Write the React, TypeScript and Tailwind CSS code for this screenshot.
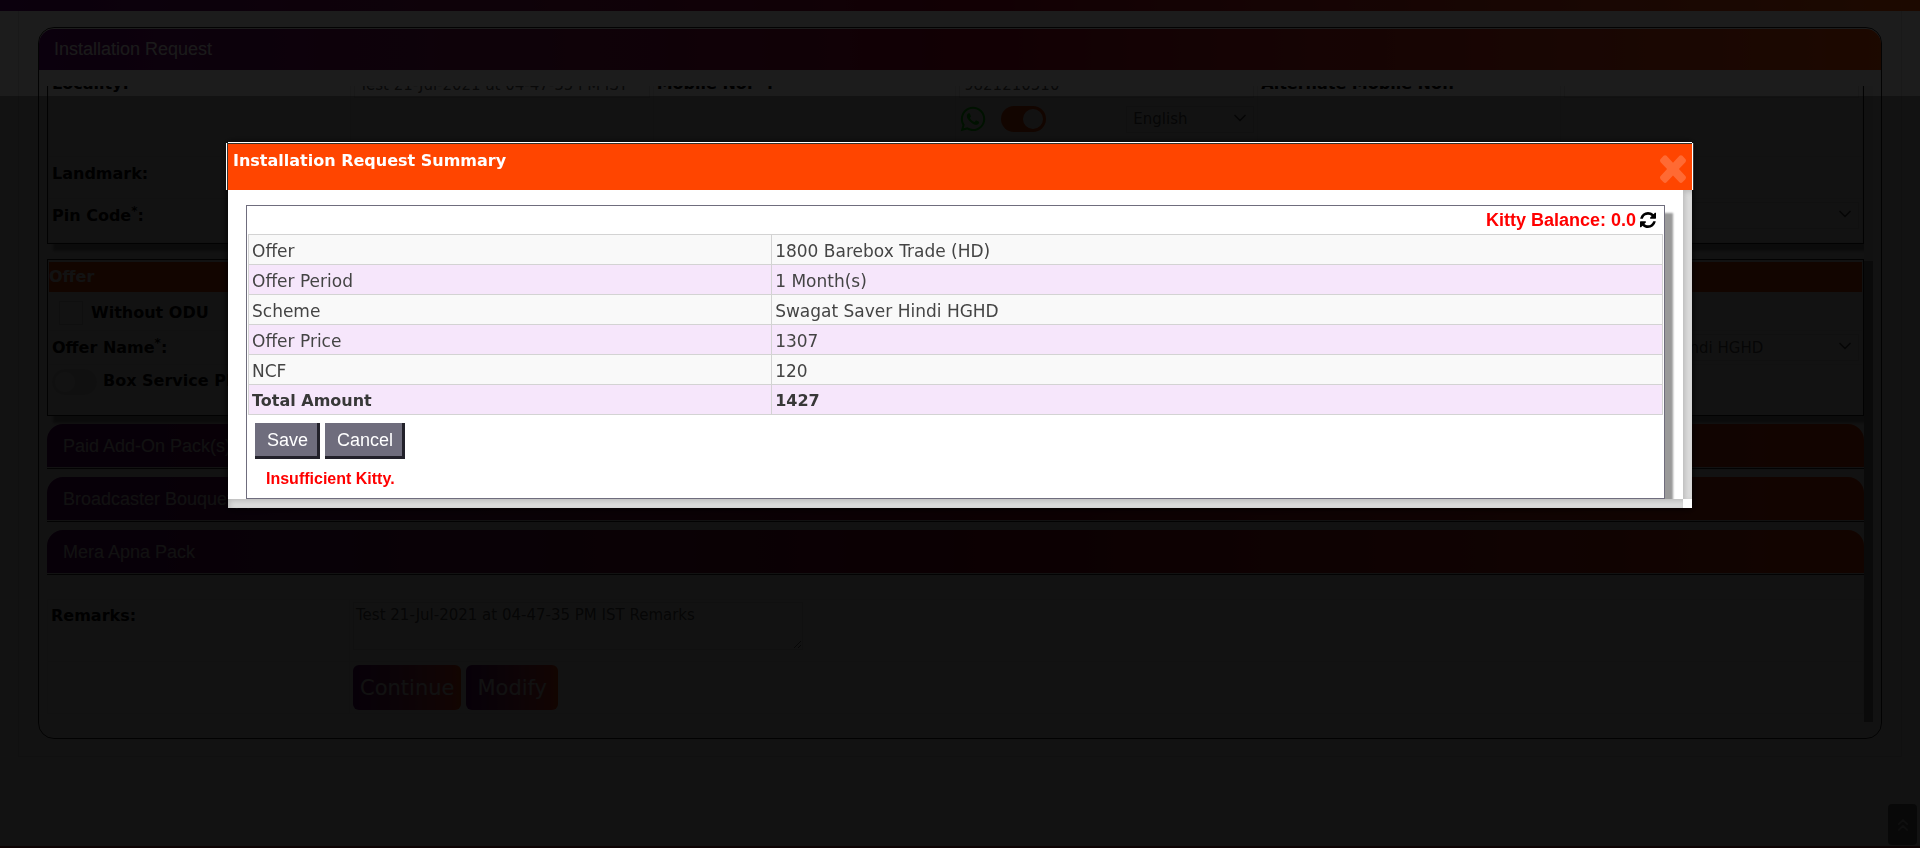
import type { ReactNode } from 'react';
import { ChevronDown, ChevronsUp } from 'lucide-react';
import { FaWhatsapp } from 'react-icons/fa';

const summary = [
  { label: 'Offer', value: '1800 Barebox Trade (HD)' },
  { label: 'Offer Period', value: '1 Month(s)' },
  { label: 'Scheme', value: 'Swagat Saver Hindi HGHD' },
  { label: 'Offer Price', value: '1307' },
  { label: 'NCF', value: '120' },
  { label: 'Total Amount', value: '1427', bold: true },
];

const packs = ['Paid Add-On Pack(s)', 'Broadcaster Bouquet(s)', 'Mera Apna Pack'];

const cell = 'border border-[#e8e8e8] px-[3px]';
const field = 'w-full border border-[#ddd] bg-white px-1 text-[15px] text-[#555]';

function SelectBox({ id, label, value, className }: { id: string; label: string; value: string; className: string }) {
  return (
    <div className={className}>
      <select id={id} aria-label={label} defaultValue={value} className="h-full w-full appearance-none border border-[#e0e0e0] bg-white px-1.5 text-[15px] text-[#555]">
        <option>{value}</option>
      </select>
      <ChevronDown className="pointer-events-none absolute right-1 top-0.5 text-[#444]" size={20} />
    </div>
  );
}

function Toggle({ id, label, on }: { id: string; label: string; on?: boolean }) {
  return (
    <input
      id={id}
      type="checkbox"
      role="switch"
      aria-label={label}
      defaultChecked={on}
      className="h-[26px] w-[45px] shrink-0 appearance-none rounded-full bg-[#e4e4e4] before:mt-[3px] before:ml-[3px] before:block before:size-5 before:rounded-full before:bg-white before:content-[''] checked:bg-[#ff4500] checked:before:ml-[22px]"
    />
  );
}

function Box({ children }: { children: ReactNode }) {
  return <section className="border border-[#222] bg-[#fbfbfb] shadow-[6px_7px_3px_#999]">{children}</section>;
}

function RequestForm() {
  return (
    <div className="flex overflow-hidden">
      <div className="min-w-0 flex-1 overflow-hidden pb-2">
        <div className="-mt-[26px]">
          <Box>
            <table className="w-full table-fixed border-collapse">
              <tbody>
                <tr className="h-[95px] align-top">
                  <td className={`${cell} pt-2.5 font-bold`}>Locality:</td>
                  <td className={`${cell} pt-1`}>
                    <input aria-label="Locality" className={`${field} h-8 pt-1.5`} defaultValue="Test 21-Jul-2021 at 04-47-35 PM IST" />
                  </td>
                  <td className={`${cell} pt-2.5 font-bold`}>Mobile No. *:</td>
                  <td className={`${cell} pt-1`}>
                    <input aria-label="Mobile number" className={`${field} h-8 pt-1.5`} defaultValue="9821210510" />
                    <div className="mt-[7px] flex items-center">
                      <FaWhatsapp size={28} className="text-[#00f000]" />
                      <span className="ml-3.5 flex">
                        <Toggle id="whatsapp" label="WhatsApp updates" on />
                      </span>
                      <SelectBox id="language" label="Language" value="English" className="relative ml-auto h-[27px] w-32" />
                    </div>
                  </td>
                  <td className={`${cell} pt-2.5 font-bold`}>Alternate Mobile No.:</td>
                  <td className={`${cell} pt-1`}>
                    <input aria-label="Alternate mobile number" className={`${field} h-8`} />
                  </td>
                </tr>
                <tr className="h-[42px]">
                  <td className={`${cell} pb-2 font-bold`}>Landmark:</td>
                  <td className={cell} colSpan={5} />
                </tr>
                <tr className="h-11">
                  <td className={`${cell} pb-2.5 font-bold`}>
                    Pin Code<sup>*</sup>:
                  </td>
                  <td className={cell} colSpan={4} />
                  <td className={`${cell} pb-2.5`}>
                    <SelectBox id="area" label="Area" value="" className="relative h-[27px]" />
                  </td>
                </tr>
              </tbody>
            </table>
          </Box>
        </div>
        <div className="mt-[15px]">
          <Box>
            <div className="px-px py-0.5">
              <h2 className="h-[30px] bg-[#ff4500] text-base leading-[30px] font-bold text-white">Offer</h2>
              <div className="flex h-[39px] items-center gap-2 border-b border-[#e8e8e8] px-2.5 pt-1">
                <input id="odu" type="checkbox" className="size-6 appearance-none border border-[#ccc]" />
                <label htmlFor="odu" className="font-bold">Without ODU</label>
              </div>
              <div className="flex h-[34px] items-center justify-between border-b border-[#e8e8e8] px-[3px]">
                <label htmlFor="offer" className="font-bold">
                  Offer Name<sup>*</sup>:
                </label>
                <SelectBox id="offer" label="Scheme" value="Swagat Saver Hindi HGHD" className="relative h-[27px] w-[300px]" />
              </div>
              <div className="flex h-12 items-start gap-1.5 px-[3px] pt-1">
                <Toggle id="plan" label="Box Service Plan" />
                <label htmlFor="plan" className="font-bold">Box Service Plan</label>
              </div>
            </div>
          </Box>
        </div>
        <div className="mt-2 flex flex-col gap-2">
          {packs.map((pack) => (
            <div key={pack} className="rounded-t-[16px] border-b border-[#333] pb-px">
              <button className="block h-[43px] w-full rounded-t-[16px] bg-linear-to-r from-[#640074] via-[#a00028] to-[#ff4000] px-4 text-left font-['Liberation_Sans',Arial,sans-serif] text-[18px] text-[#eee]">
                {pack}
              </button>
            </div>
          ))}
        </div>
        <table className="mt-6 w-full border-collapse bg-[#fbfbfb]">
          <tbody>
            <tr className="h-[62px] align-top">
              <td className={`${cell} w-[302px] pt-1`}>
                <label htmlFor="remarks" className="font-bold">Remarks:</label>
              </td>
              <td className={`${cell} pt-0.5`}>
                <textarea id="remarks" className="block h-12 w-[450px] border border-[#ddd] bg-white px-0.5 text-[15px] text-[#555]" defaultValue="Test 21-Jul-2021 at 04-47-35 PM IST Remarks" />
              </td>
            </tr>
            <tr className="h-[52px]">
              <td className={cell} />
              <td className={cell}>
                <div className="flex gap-[5px]">
                  <button className="h-[45px] rounded-md bg-linear-to-r from-[#640074] to-[#ff4500] px-[7px] text-[21px] text-[#eee]">Continue</button>
                  <button className="h-[45px] rounded-md bg-linear-to-r from-[#640074] to-[#ff4500] px-[11px] text-[21px] text-[#eee]">Modify</button>
                </div>
              </td>
            </tr>
          </tbody>
        </table>
      </div>
      <div className="flex w-[9px] bg-[#f1f1f1] pt-[175px]">
        <div className="flex-1 bg-[#8a8a8a]" />
      </div>
    </div>
  );
}

function RefreshIcon() {
  return (
    <svg viewBox="0 0 1536 1536" className="size-4" fill="currentColor" aria-hidden="true">
      <path d="M1511 928q0 5-1 7-64 268-268 434.5t-478 166.5q-146 0-282.5-55t-243.5-157l-129 129q-19 19-45 19t-45-19-19-45v-448q0-26 19-45t45-19h448q26 0 45 19t19 45-19 45l-137 137q71 66 161 102t187 36q134 0 250-65t186-179q11-17 53-117 8-23 30-23h192q13 0 22.5 9.5t9.5 22.5zm25-800v448q0 26-19 45t-45 19h-448q-26 0-45-19t-19-45 19-45l138-138q-148-137-349-137-134 0-250 65t-186 179q-11 17-53 117-8 23-30 23h-199q-13 0-22.5-9.5t-9.5-22.5v-7q65-268 270-434.5t480-166.5q146 0 284 55.5t245 156.5l130-129q19-19 45-19t45 19 19 45z" />
    </svg>
  );
}

function CloseIcon() {
  return (
    <svg viewBox="110 122 1188 1196" preserveAspectRatio="none" className="h-7 w-[26px]" fill="currentColor" aria-hidden="true">
      <path d="M1298 1086q0 40-28 68l-136 136q-28 28-68 28t-68-28l-294-294-294 294q-28 28-68 28t-68-28l-136-136q-28-28-28-68t28-68l294-294-294-294q-28-28-28-68t28-68l136-136q28-28 68-28t68 28l294 294 294-294q28-28 68-28t68 28l136 136q28 28 28 68t-28 68l-294 294 294 294q28 28 28 68z" />
    </svg>
  );
}

function SummaryDialog() {
  const button =
    "h-9 border-r-[3px] border-b-[3px] border-[#22212a] bg-[#6f6d7d] pl-3 text-[18px] text-white";
  return (
    <div role="dialog" aria-labelledby="summary-title" className="bg-white shadow-[0_0_8px_#000]">
      <header className="flex h-[47px] items-start justify-between border-t border-[#33332b] bg-[#ff4500] pt-[7px] pr-1.5 pl-[5px] shadow-[0_-1px_0_#fff,1px_0_0_#fff,-1px_0_0_#333,2px_0_0_#333,-2px_0_0_#fff]">
        <h1 id="summary-title" className="text-base leading-5 font-bold text-white">Installation Request Summary</h1>
        <button aria-label="Close" className="mt-1 text-[#ff6a33]">
          <CloseIcon />
        </button>
      </header>
      <div className="flex">
        <div className="min-w-0 flex-1 overflow-hidden pt-[15px] pr-[18px] pl-[18px]">
          <div className="border border-[#6f6d7d] px-px shadow-[8px_8px_2px_#999]">
            <div className="flex h-7 items-center justify-end gap-1 pr-[7px]">
              <span className="font-['Liberation_Sans',Arial,sans-serif] text-[18px] font-bold text-[#ff0000]">Kitty Balance: 0.0</span>
              <button aria-label="Refresh balance" className="text-black">
                <RefreshIcon />
              </button>
            </div>
            <table className="w-full border-collapse leading-5 text-[#444]">
              <tbody>
                {summary.map((row) => (
                  <tr key={row.label} className={`h-[30px] odd:bg-[#f9f9f9] even:bg-[#f6e6fb] ${row.bold ? 'text-base font-bold text-[#383838]' : 'text-[17px]'}`}>
                    <td className="w-[37%] border border-[#d3d3d3] px-[3px] pt-0.5">{row.label}</td>
                    <td className="border border-[#d3d3d3] px-[3px] pt-0.5">{row.value}</td>
                  </tr>
                ))}
              </tbody>
            </table>
            <div className="flex gap-[5px] px-[7px] pt-2 font-['Liberation_Sans',Arial,sans-serif]">
              <button className={`${button} pr-[9px]`}>Save</button>
              <button className={`${button} pr-[9px]`}>Cancel</button>
            </div>
            <p className="px-[18px] pt-2 pb-[7px] font-['Liberation_Sans',Arial,sans-serif] text-base leading-6 font-bold text-[#ff0000]">
              Insufficient Kitty.
            </p>
          </div>
        </div>
        <div className="w-[9px] bg-[#dcdcdc] shadow-[inset_2px_2px_5px_#bbb]" />
      </div>
      <div className="mr-[9px] h-[9px] bg-[#dcdcdc] shadow-[inset_2px_2px_5px_#bbb]" />
    </div>
  );
}

export default function App() {
  return (
    <div className="flex min-h-screen flex-col bg-[#f4f4f4] font-['DejaVu_Sans',Verdana,sans-serif] text-base leading-6 text-black">
      <div className="h-[11px] bg-linear-to-r from-[#640074] via-[#a00028] to-[#ff5800]" />
      <div className="bg-white px-[18px]">
        <main className="border-x border-b border-[#ddd] px-[19px] pt-4 pb-[17px]">
          <div className="rounded-[16px] border border-[#222] pt-px">
            <h1 className="h-[41px] rounded-t-[15px] bg-linear-to-r from-[#640074] via-[#a00028] to-[#ff5000] px-[15px] font-['Liberation_Sans',Arial,sans-serif] text-[18px] leading-10 text-[#eee]">
              Installation Request
            </h1>
            <div className="px-2 pt-4 pb-4">
              <RequestForm />
            </div>
          </div>
        </main>
      </div>
      <footer className="mt-auto h-[30px] border-b-2 border-[#b33] bg-white" />
      <button aria-label="Back to top" className="fixed right-[3px] bottom-[3px] flex h-[41px] w-[29px] items-center justify-center rounded bg-[#777] text-[#ccc]">
        <ChevronsUp size={20} />
      </button>

      <div className="fixed inset-0 flex flex-col">
        <div className="h-24 bg-black/89" />
        <div className="flex-1 bg-black/93" />
      </div>
      <div className="fixed inset-x-0 top-0 px-[11.875%] pt-[143px]">
        <SummaryDialog />
      </div>
    </div>
  );
}
